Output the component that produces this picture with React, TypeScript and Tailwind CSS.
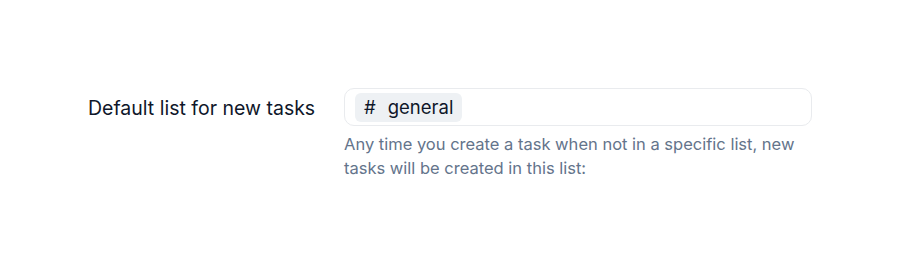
export default function App() {
  return (
    <div
      className="flex min-h-[264px] justify-center bg-white pt-[88px]"
      style={{ fontFamily: "Inter, 'Noto Sans', sans-serif" }}
    >
      <div className="flex w-[724px] items-start">
        <label className="w-64 shrink-0 pt-[7px] text-[19.5px] leading-[26px] text-[#0f172a]">
          Default list for new tasks
        </label>
        <div className="flex-1">
          <div className="flex h-[38px] items-center rounded-[10px] border border-[#e9ebee] bg-white px-[10px]">
            <span className="flex h-[29px] items-center gap-[12px] rounded-[6px] bg-[#eef1f4] pl-[9px] pr-[9px] text-[18.5px] leading-[29px] text-[#0f172a]">
              <span>#</span>
              <span>general</span>
            </span>
          </div>
          <p className="mt-[6px] text-[16.5px] leading-[24px] text-[#64748b]">
            Any time you create a task when not in a specific list, new tasks will be created in this list:
          </p>
        </div>
      </div>
    </div>
  );
}
